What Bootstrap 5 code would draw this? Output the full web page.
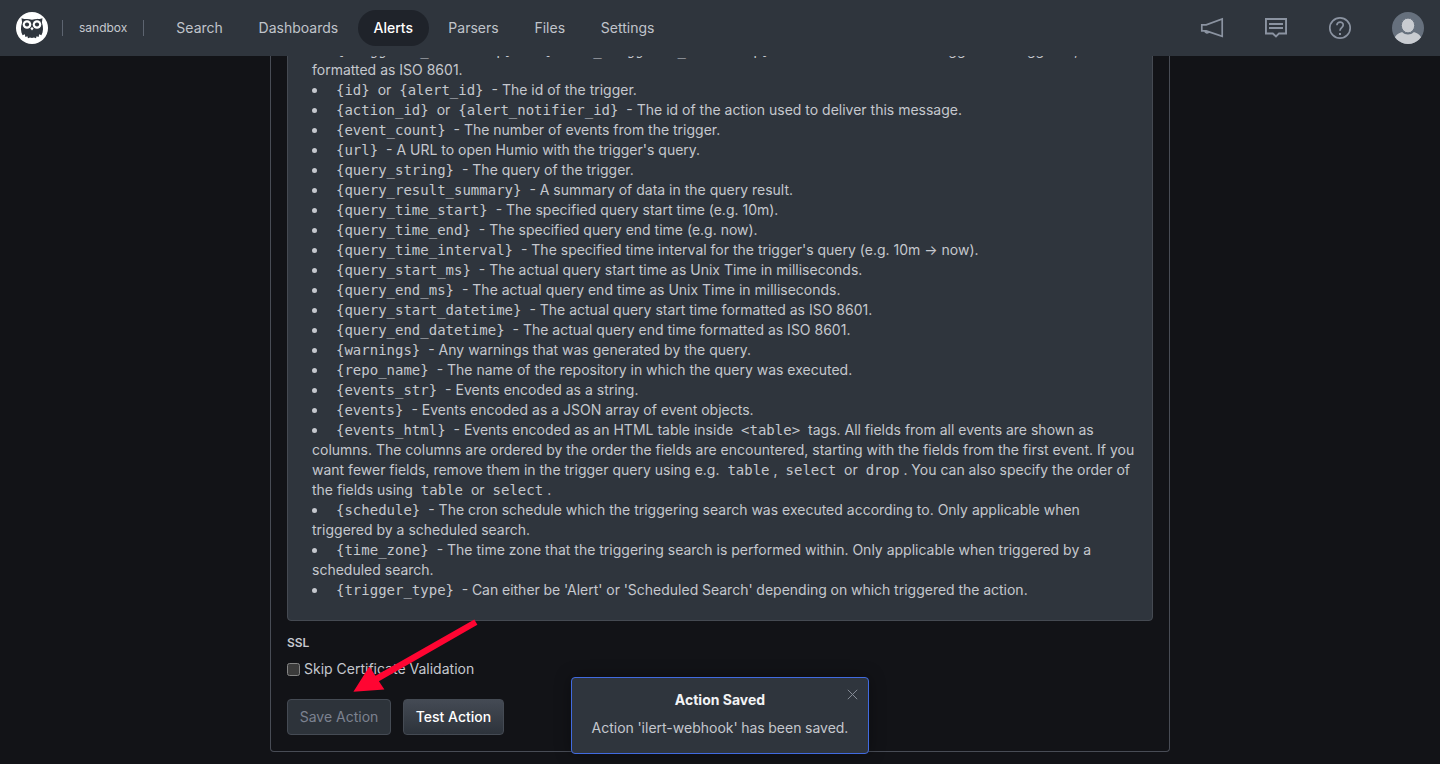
<!DOCTYPE html>
<html lang="en">
<head>
<meta charset="utf-8">
<meta name="viewport" content="width=device-width, initial-scale=1">
<title>Alerts - sandbox</title>
<link rel="stylesheet" href="https://cdn.jsdelivr.net/npm/bootstrap@5.3.0/dist/css/bootstrap.min.css">
<style>
:root{--surface:#2f353d;--page:#121317;--line:#484c55;--copy:#c5c8ce}
body{font-family:Inter,"Liberation Sans",sans-serif;font-size:14px;line-height:20px;background:var(--page);color:var(--copy);height:764px;overflow:hidden}
.topbar{height:56px;background:var(--surface);padding:0 16px}
.topbar .nav{gap:3.8px}
.topbar .nav-link{color:#c0c4cb;padding:8px 16px;line-height:20px;border-radius:18px}
.topbar .nav-link.active{background:#1f232a;color:#fff;font-weight:500;padding:8px 15.5px}
.rule{width:1px;height:16px;background:#5d6470}
.repo{font-size:12px;line-height:16px}
.tools svg{display:block}
.viewport{height:708px;overflow:hidden;padding-bottom:12px}
.panel{width:900px;border:1px solid var(--line);border-top:0;border-radius:0 0 4px 4px;padding:0 16px 16px}
.help{background:var(--surface);border:1px solid #454a52;border-radius:0 0 4px 4px;padding:0 16px 20px 24px}
.help ul{list-style:disc inside;padding:0;margin:0}
.help li:last-child{word-spacing:-.22px}
.help code{font:14px/20px "DejaVu Sans Mono",monospace;color:inherit;padding:0 4px}
.ssl-title{font-size:12px;line-height:16px;font-weight:600;margin-top:14px}
.skip{height:20px;margin-top:8px;gap:4px}
.tick{width:13px;height:13px;margin:1px 0 0;appearance:none;background:#3b3b3b;border:1px solid #858585;border-radius:2.5px}
.actions{gap:12px;margin-top:20px}
.actions .btn{font-size:14px;line-height:20px;padding:7px 0;border-radius:4px;height:36px;border:1px solid #454b54;white-space:nowrap}
.actions .btn-save{width:104px}
.actions .btn-test{width:101px}
.btn-save:disabled{background:#2d333a;color:#7c8290;opacity:1}
.btn-test{background:linear-gradient(#444a54,#2d333b);color:#fff;font-weight:500}
.btn-test:hover{color:#fff}
.notice{position:absolute;left:571px;top:677px;width:298px;height:77px;background:var(--surface);border:1px solid #416be0;border-radius:4px;padding-top:12px;text-align:center;box-shadow:0 0 16px rgba(0,0,0,.35)}
.notice h6{font-size:14px;line-height:20px;font-weight:700;color:#f2f3f5;margin:0 0 8px}
.notice div{word-spacing:-.4px}
.notice button{position:absolute;right:10.5px;top:10.5px;width:11px;height:11px;padding:0;border:0;background:none;display:flex}
.pointer{position:absolute;left:350px;top:616px;pointer-events:none}
</style>
</head>
<body>
<nav class="topbar d-flex align-items-center">
  <svg width="32" height="32" viewBox="0 0 32 32" aria-label="Humio">
    <circle cx="16" cy="16" r="16" fill="#fff"/>
    <path fill="#2f353d" d="M5.500 6.200C9 7.600 13 6.500 16 7.800c3-1.300 7-.2 10.500-1.600l-.6 4.300c1.700 4.700 1.500 9.200-.5 12.800l-2.200-1-.6 2.600-2-.6-.6 2-2-.9-2 .7-2-.7-2 .9-.6-2-2 .6-.6-2.600-2.200 1c-2-3.600-2.200-8.100-.5-12.800z"/>
    <circle cx="11" cy="12.500" r="4.300" fill="#fff"/><circle cx="21" cy="12.500" r="4.300" fill="#fff"/>
    <circle cx="11" cy="12.500" r="2.100" fill="#2f353d"/><circle cx="21" cy="12.500" r="2.100" fill="#2f353d"/>
    <path fill="#fff" d="M16 14.900l1.600 1.500L16 18.600l-1.600-2.200z"/>
  </svg>
  <span class="rule" style="margin-left:14px"></span>
  <span class="repo" style="margin:0 16px">sandbox</span>
  <span class="rule"></span>
  <div class="nav flex-nowrap ms-3">
    <a class="nav-link" href="#">Search</a>
    <a class="nav-link" href="#">Dashboards</a>
    <a class="nav-link active" href="#">Alerts</a>
    <a class="nav-link" href="#">Parsers</a>
    <a class="nav-link" href="#">Files</a>
    <a class="nav-link" href="#">Settings</a>
  </div>
  <div class="tools d-flex align-items-center ms-auto" style="gap:40px">
    <svg width="24" height="24" viewBox="0 0 24 24" fill="none" stroke="#8b93a1" stroke-width="1.700"><path d="M1.800 8.800h4.400L22.200 3v17.200L6.200 14.900H1.800zM4.900 15c.2 2.300 3.400 2.500 3.700.6"/></svg>
    <svg width="24" height="24" viewBox="0 0 24 24" fill="none" stroke="#8b93a1" stroke-width="1.900"><path d="M1.950 2.950h20.100v14.500h-7L12 20.500l-3.200-3.050H1.950zM5 8h14M5 12h14"/></svg>
    <svg width="24" height="24" viewBox="0 0 24 24" fill="none" stroke="#8b93a1" stroke-width="1.700"><circle cx="12" cy="12" r="10.200"/><path d="M8.900 9.300c0-4.300 6.600-4.100 6.300-.2-.2 2.500-3.200 2.500-3.200 5.600"/><path d="M11 17.900h2" stroke-width="2"/></svg>
    <svg width="32" height="32" viewBox="0 0 32 32"><defs><clipPath id="face"><circle cx="16" cy="16" r="16"/></clipPath></defs><g clip-path="url(#face)"><path fill="#66707d" d="M0 0h32v32H0z"/><path fill="#c9ccd1" d="M2 27c2-4.500 5.500-6.700 8.500-6.700 2.500 2.900 8.500 2.900 11 0 3 0 6.500 2.200 8.500 6.700v6H2z"/><ellipse cx="16" cy="13.500" rx="6.700" ry="7.400" fill="#c9ccd1" stroke="#66707d" stroke-width="1"/></g></svg>
  </div>
</nav>
<main class="viewport d-flex flex-column justify-content-end align-items-center">
  <section class="panel flex-shrink-0">
    <div class="help">
      <ul>
        <li><code>{triggered_timestamp}</code> or <code>{alert_triggered_timestamp}</code> - The time at which the trigger was triggered,<br>formatted as ISO 8601.</li>
        <li><code>{id}</code> or <code>{alert_id}</code> - The id of the trigger.</li>
        <li><code>{action_id}</code> or <code>{alert_notifier_id}</code> - The id of the action used to deliver this message.</li>
        <li><code>{event_count}</code> - The number of events from the trigger.</li>
        <li><code>{url}</code> - A URL to open Humio with the trigger's query.</li>
        <li><code>{query_string}</code> - The query of the trigger.</li>
        <li><code>{query_result_summary}</code> - A summary of data in the query result.</li>
        <li><code>{query_time_start}</code> - The specified query start time (e.g. 10m).</li>
        <li><code>{query_time_end}</code> - The specified query end time (e.g. now).</li>
        <li><code>{query_time_interval}</code> - The specified time interval for the trigger's query (e.g. 10m -&gt; now).</li>
        <li><code>{query_start_ms}</code> - The actual query start time as Unix Time in milliseconds.</li>
        <li><code>{query_end_ms}</code> - The actual query end time as Unix Time in milliseconds.</li>
        <li><code>{query_start_datetime}</code> - The actual query start time formatted as ISO 8601.</li>
        <li><code>{query_end_datetime}</code> - The actual query end time formatted as ISO 8601.</li>
        <li><code>{warnings}</code> - Any warnings that was generated by the query.</li>
        <li><code>{repo_name}</code> - The name of the repository in which the query was executed.</li>
        <li><code>{events_str}</code> - Events encoded as a string.</li>
        <li><code>{events}</code> - Events encoded as a JSON array of event objects.</li>
        <li><code>{events_html}</code> - Events encoded as an HTML table inside <code>&lt;table&gt;</code> tags. All fields from all events are shown as columns. The columns are ordered by the order the fields are encountered, starting with the fields from the first event. If you want fewer fields, remove them in the trigger query using e.g. <code>table</code>, <code>select</code> or <code>drop</code>. You can also specify the order of the fields using <code>table</code> or <code>select</code>.</li>
        <li><code>{schedule}</code> - The cron schedule which the triggering search was executed according to. Only applicable when triggered by a scheduled search.</li>
        <li><code>{time_zone}</code> - The time zone that the triggering search is performed within. Only applicable when triggered by a scheduled search.</li>
        <li><code>{trigger_type}</code> - Can either be 'Alert' or 'Scheduled Search' depending on which triggered the action.</li>
      </ul>
    </div>
    <div class="ssl-title">SSL</div>
    <label class="skip d-flex align-items-center"><input class="tick" type="checkbox">Skip Certificate Validation</label>
    <div class="actions d-flex">
      <button class="btn btn-save" type="button" disabled>Save Action</button>
      <button class="btn btn-test" type="button">Test Action</button>
    </div>
  </section>
</main>
<div class="notice" role="status">
  <h6>Action Saved</h6>
  <div>Action 'ilert-webhook' has been saved.</div>
  <button type="button" aria-label="Close"><svg width="11" height="11" viewBox="0 0 11 11" stroke="#858b95"><path d="M.8.8l9.400 9.400M10.200.8L.8 10.200"/></svg></button>
</div>
<svg class="pointer" width="132" height="80" viewBox="0 0 132 80" fill="#ff0532"><path d="M124.300 3.600l3.100 5.200L28.900 65.200l5.500 8.300L3.400 75.800 19.300 50.500l6.200 9.300z"/></svg>
<script src="https://cdn.jsdelivr.net/npm/bootstrap@5.3.0/dist/js/bootstrap.bundle.min.js"></script>
</body>
</html>
